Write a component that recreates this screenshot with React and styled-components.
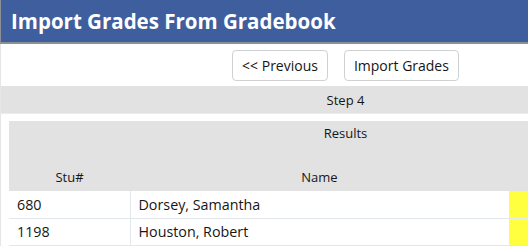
import React from "react";
import styled, { createGlobalStyle } from "styled-components";

const Global = createGlobalStyle`
  html, body { margin: 0; padding: 0; background: #ffffff; overflow: hidden; }
  body { font-family: "Open Sans", Lato, sans-serif; color: #161616; }
`;

const Header = styled.header`
  height: 42px;
  background: #3f5e9e;
  border-bottom: 2px solid #8c9096;
  border-left: 1px solid #8c9096;
  display: flex;
  align-items: center;
  padding-left: 10px;
`;

const Title = styled.h1`
  margin: 0;
  font-size: 20.5px;
  font-weight: 700;
  color: #ffffff;
`;

const Page = styled.main`
  width: 689px;
  border-left: 1px solid #e4e6e8;
`;

const Toolbar = styled.div`
  height: 42px;
  display: flex;
  justify-content: center;
  align-items: center;
  gap: 16px;
`;

const Button = styled.button`
  height: 31px;
  padding: 0 9px;
  background: #ffffff;
  border: 1px solid #cfd2d5;
  border-radius: 4px;
  font-family: inherit;
  font-size: 14px;
  color: #161616;
`;

const StepBar = styled.div`
  height: 27px;
  background: #e1e2e1;
  border-bottom: 1px solid #e6edf3;
  display: flex;
  justify-content: center;
  align-items: center;
  font-size: 13px;
`;

const Section = styled.section`
  padding: 7px 8px 0 8px;
`;

const Table = styled.table`
  width: 100%;
  border-collapse: collapse;
  font-size: 14.3px;
`;

const Caption = styled.th`
  background: #e1e2e1;
  height: 36px;
  vertical-align: top;
  padding: 3px 0 0;
  font-weight: 400;
  font-size: 13px;
  text-align: center;
`;

const HeadCell = styled.th`
  background: #e1e2e1;
  height: 28px;
  padding: 3px 0 0;
  font-weight: 400;
  font-size: 13px;
  text-align: center;
  width: ${(p) => p.$w || "auto"};
`;

const Row = styled.tr`
  height: 27px;
  border-bottom: 1px solid #e3e8ee;
`;

const Cell = styled.td`
  padding: 0 9px 0 8px;
  border-right: ${(p) => (p.$divider ? "1px solid #e3e8ee" : "none")};
  background: ${(p) => (p.$flag ? "#ffff40" : "transparent")};
`;

const students = [
  { id: "680", name: "Dorsey, Samantha" },
  { id: "1198", name: "Houston, Robert" },
];

export default function App() {
  return (
    <>
      <Global />
      <Header>
        <Title>Import Grades From Gradebook</Title>
      </Header>
      <Page>
        <Toolbar>
          <Button>&lt;&lt; Previous</Button>
          <Button>Import Grades</Button>
        </Toolbar>
        <StepBar>Step 4</StepBar>
        <Section>
          <Table>
            <thead>
              <tr>
                <Caption colSpan={3}>Results</Caption>
              </tr>
              <tr>
                <HeadCell $w="121px">Stu#</HeadCell>
                <HeadCell $w="379px">Name</HeadCell>
                <HeadCell />
              </tr>
            </thead>
            <tbody>
              {students.map((s) => (
                <Row key={s.id}>
                  <Cell $divider>{s.id}</Cell>
                  <Cell>{s.name}</Cell>
                  <Cell $flag />
                </Row>
              ))}
            </tbody>
          </Table>
        </Section>
      </Page>
    </>
  );
}
